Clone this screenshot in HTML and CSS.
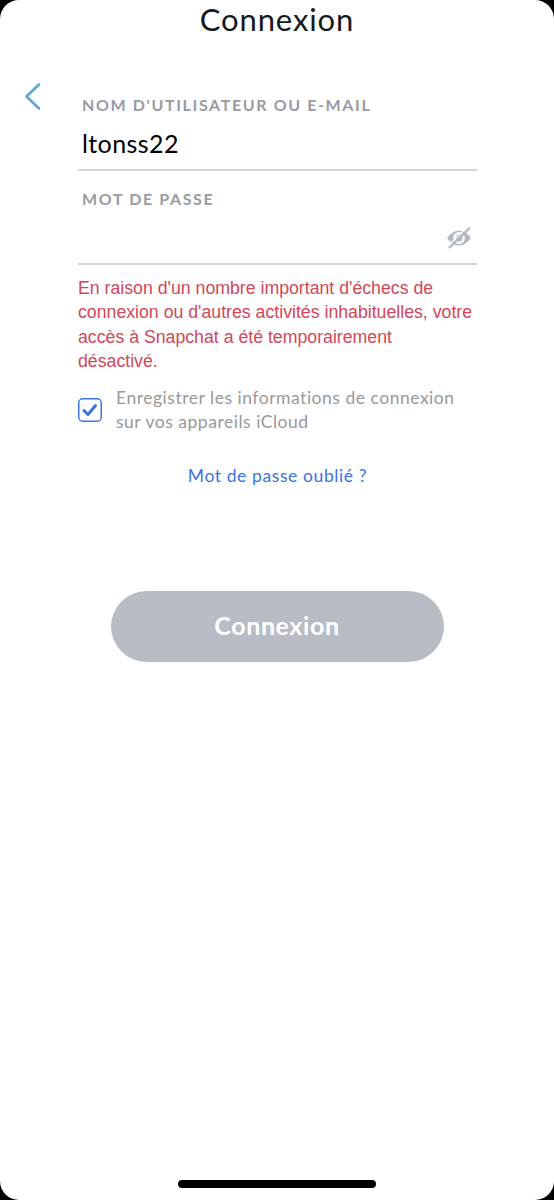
FILE: index.html
```html
<!DOCTYPE html>
<html lang="fr">
<head>
<meta charset="utf-8">
<title>Connexion</title>
<link rel="stylesheet" href="styles.css">
</head>
<body>
<main class="screen">
  <h1 class="title">Connexion</h1>
  <div class="content">
    <a class="back" aria-label="Retour">
      <svg width="18" height="30" viewBox="0 0 18 30"><path d="M15 2.500 2.500 14.500 15 26.500" fill="none" stroke="#5ba7d8" stroke-width="2.600" stroke-linecap="round" stroke-linejoin="round"/></svg>
    </a>
    <form class="form">
      <div class="field">
        <div class="label">NOM D'UTILISATEUR OU E-MAIL</div>
        <div class="value">ltonss22</div>
      </div>
      <div class="field field-password">
        <div class="label">MOT DE PASSE</div>
        <svg class="eye" width="26" height="24" viewBox="0 0 26 24">
          <path d="M1 12Q6.500 4.500 13 4.500T25 12Q19.500 19.500 13 19.500T1 12Z" fill="#b5bac2"/>
          <circle cx="13" cy="12" r="5.900" fill="#fff"/>
          <circle cx="13" cy="12" r="3.500" fill="#b5bac2"/>
          <path d="M1.800 20 21.800 .6" stroke="#fff" stroke-width="1.100"/>
          <path d="M3.500 21.500 23.300 2.300" stroke="#b5bac2" stroke-width="2.300" stroke-linecap="round"/>
        </svg>
      </div>
      <p class="error">En raison d'un nombre important d'échecs de<br>connexion ou d'autres activités inhabituelles, votre<br>accès à Snapchat a été temporairement<br>désactivé.</p>
      <div class="remember">
        <svg class="checkbox" width="24" height="24" viewBox="0 0 24 24">
          <rect x=".75" y=".75" width="22.500" height="22.500" rx="4" fill="#fff" stroke="#3f76df" stroke-width="1.500"/>
          <path d="M6 12.500 10 16.500 17.500 7.500" fill="none" stroke="#3973e3" stroke-width="3" stroke-linecap="round" stroke-linejoin="round"/>
        </svg>
        <p class="remember-text">Enregistrer les informations de connexion<br>sur vos appareils iCloud</p>
      </div>
      <a class="forgot">Mot de passe oublié ?</a>
    </form>
  </div>
  <button class="submit" type="button">Connexion</button>
  <div class="home-bar"></div>
</main>
</body>
</html>
```
FILE: styles.css
```css
* { box-sizing: border-box; }
body { margin: 0; background: #000; font-family: Lato, sans-serif; }
.screen {
  display: flex;
  flex-direction: column;
  align-items: center;
  width: 554px;
  height: 1200px;
  padding-bottom: 12px;
  overflow: hidden;
  border-radius: 19px;
  background: #fff;
}
.title {
  margin: 0;
  height: 82px;
  padding-top: 1px;
  font-size: 31px;
  line-height: 36px;
  font-weight: 400;
  letter-spacing: .9px;
  color: #16191c;
}
.content { display: flex; width: 100%; padding-left: 24px; }
.back { width: 54px; height: 30px; }
.back svg { display: block; }
.form { width: 399px; display: flex; flex-direction: column; }
.field { height: 89px; border-bottom: 2px solid #d0d4da; padding: 13px 4px 0; }
.field-password { position: relative; height: 94px; padding-top: 18px; }
.label { font-size: 16px; line-height: 20px; font-weight: 700; letter-spacing: 1.620px; color: #989ba3; white-space: nowrap; }
.value { margin-top: 13px; font-size: 25px; line-height: 30px; letter-spacing: .4px; color: #000; }
.eye { position: absolute; right: 5px; top: 55px; }
.error { margin: 11px 0 0; font: 17.720px/24.300px "Liberation Sans", sans-serif; color: #d34658; white-space: nowrap; }
.remember { display: flex; gap: 14px; margin-top: 13px; }
.checkbox { margin-top: 12px; }
.remember-text { margin: 0; font-size: 17.500px; line-height: 24px; color: #999; white-space: nowrap; letter-spacing: .52px; }
.forgot { margin-top: 30px; text-align: center; font-size: 17.500px; line-height: 24px; letter-spacing: .6px; color: #3973e3; }
.submit { width: 333px; height: 71px; margin-top: 103px; padding: 0 0 4px; border: 0; border-radius: 36px; background: #b8bdc5; color: #fff; font: 700 25px/30px Lato, sans-serif; letter-spacing: .6px; }
.home-bar { width: 198px; height: 8px; margin-top: auto; border-radius: 4px; background: #000; }
```
